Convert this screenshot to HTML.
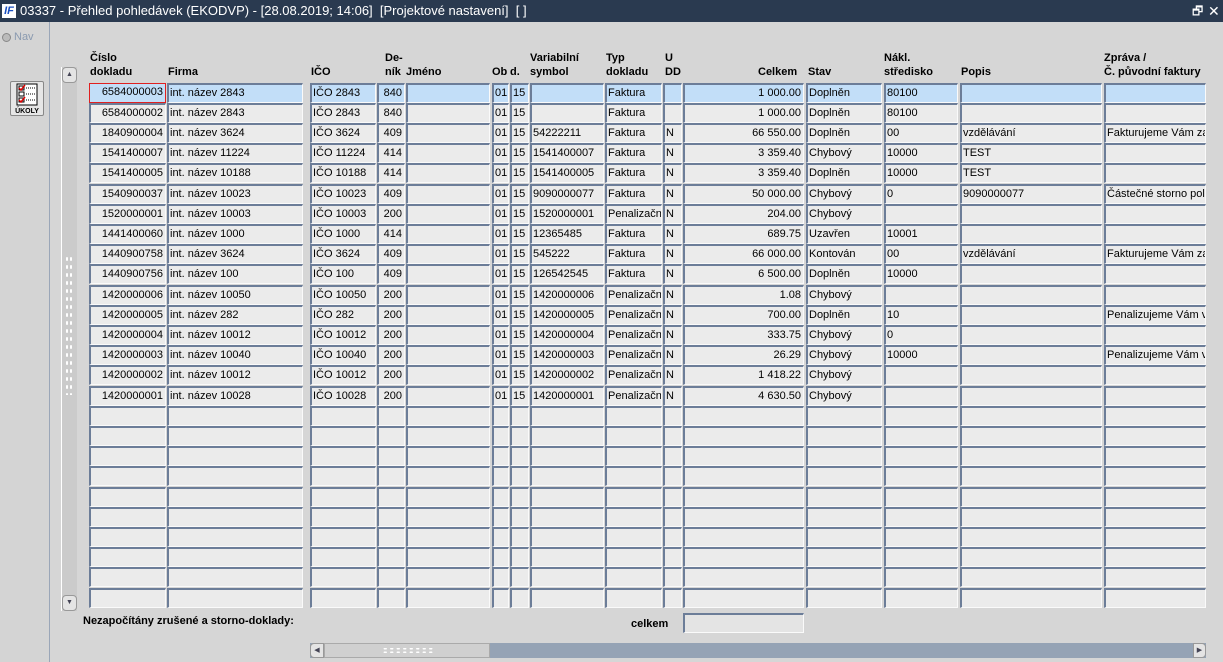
<!DOCTYPE html>
<html><head><meta charset="utf-8">
<style>
*{margin:0;padding:0;box-sizing:border-box}
body{width:1223px;height:662px;overflow:hidden;background:#d6d6d6;font-family:"Liberation Sans",Arial,sans-serif;font-size:11px;color:#000;position:relative}
.a{position:absolute;white-space:nowrap}
#tb{left:0;top:0;width:1223px;height:22px;background:#2a3a50;color:#fff;font-size:13px;line-height:22px}
#left{left:0;top:22px;width:50px;height:640px;background:#d4d4d4;border-right:1px solid #9aa6b8}
.h{font-weight:bold;line-height:14px}
.r{position:absolute;left:0;width:1223px;height:20px}
.r span{position:absolute;top:0;height:20px;background:#ebebeb;border-top:2px solid #6c7d98;border-left:2px solid #6c7d98;border-right:1px solid #fafafa;border-bottom:1px solid #fafafa;line-height:16px;padding-left:1px;padding-right:2px;overflow:hidden;white-space:nowrap}
.s span{background:#c2def8}
.c1{left:89px;width:77px;text-align:right}
.c2{left:167px;width:136px}
.c3{left:310px;width:66px}
.c4{left:377px;width:28px;text-align:right}
.c5{left:406px;width:84px}
.c6{left:492px;width:17px}
.c7{left:510px;width:19px}
.c8{left:530px;width:74px}
.c9{left:605px;width:57px}
.c10{left:663px;width:19px}
.c11{left:683px;width:121px;text-align:right}
.c12{left:806px;width:76px}
.c13{left:884px;width:74px}
.c14{left:960px;width:142px}
.c15{left:1104px;width:102px}
</style></head><body>
<div id="tb" class="a"><span style="position:absolute;left:2px;top:4px;width:14px;height:14px;background:#fff;color:#1a4fc0;font-weight:bold;font-style:italic;font-size:11px;line-height:14px;text-align:center">IF</span><span style="position:absolute;left:20px">03337 - Přehled pohledávek (EKODVP) - [28.08.2019; 14:06]&nbsp; [Projektové nastavení]&nbsp; [ ]</span><span style="position:absolute;left:1192px;font-size:12px">🗗</span><span style="position:absolute;left:1208px;font-size:14px">✕</span></div>
<div id="left" class="a">
<div class="a" style="left:2px;top:11px;width:9px;height:9px;border-radius:50%;background:#bbb;border:1px solid #888"></div>
<div class="a" style="left:14px;top:9px;color:#8a9ab0;font-size:11px">Nav</div>
<div class="a" style="left:10px;top:59px;width:34px;height:35px;background:#e6e6e6;border:1px solid #888;border-radius:2px">
<svg width="32" height="33" viewBox="0 0 32 33"><rect x="6" y="2" width="20" height="21" fill="#fff" stroke="#000"/><rect x="8" y="4" width="5" height="4" fill="none" stroke="#000"/><path d="M8 6l2 2 4-5" stroke="#d00" fill="none" stroke-width="1.5"/><rect x="8" y="10" width="5" height="4" fill="none" stroke="#000"/><rect x="8" y="16" width="5" height="4" fill="none" stroke="#000"/><path d="M8 18l2 2 4-5" stroke="#d00" fill="none" stroke-width="1.5"/><path d="M15 6h9M15 12h9M15 18h9" stroke="#000" stroke-dasharray="1 1"/><text x="16" y="31" font-size="7" font-weight="bold" text-anchor="middle" font-family="Liberation Sans">ÚKOLY</text></svg></div>
</div>
<!-- vertical scrollbar -->
<div class="a" style="left:61px;top:67px;width:16px;height:544px;background:#cbcbcb;border-left:1px solid #fff"></div>
<div class="a" style="left:62px;top:67px;width:15px;height:16px;background:#e4e4e4;border:1px solid #999;border-radius:4px;text-align:center;font-size:7px;line-height:13px;color:#445">▲</div>
<div class="a" style="left:62px;top:595px;width:15px;height:16px;background:#e4e4e4;border:1px solid #999;border-radius:4px;text-align:center;font-size:7px;line-height:13px;color:#445">▼</div>
<div class="a" style="left:65px;top:255px;width:8px;height:140px;background-image:radial-gradient(#fff 35%,transparent 40%);background-size:4px 8px"></div>
<!-- headers -->
<div class="a h" style="left:90px;top:51px">Číslo<br>dokladu</div>
<div class="a h" style="left:168px;top:65px">Firma</div>
<div class="a h" style="left:311px;top:65px">IČO</div>
<div class="a h" style="left:385px;top:51px">De-<br>ník</div>
<div class="a h" style="left:406px;top:65px">Jméno</div>
<div class="a h" style="left:492px;top:65px">Ob</div>
<div class="a h" style="left:510px;top:65px">d.</div>
<div class="a h" style="left:530px;top:51px">Variabilní<br>symbol</div>
<div class="a h" style="left:606px;top:51px">Typ<br>dokladu</div>
<div class="a h" style="left:665px;top:51px">U<br>DD</div>
<div class="a h" style="left:758px;top:65px">Celkem</div>
<div class="a h" style="left:808px;top:65px">Stav</div>
<div class="a h" style="left:884px;top:51px">Nákl.<br>středisko</div>
<div class="a h" style="left:961px;top:65px">Popis</div>
<div class="a h" style="left:1104px;top:51px">Zpráva /<br>Č. původní faktury</div>
<!-- rows -->
<div class="r s" style="top:83px"><span class="c1" style="border:1px solid #e02020;background:#c2def8">6584000003</span><span class="c2">int. název 2843</span><span class="c3">IČO 2843</span><span class="c4">840</span><span class="c5"></span><span class="c6">01</span><span class="c7">15</span><span class="c8"></span><span class="c9">Faktura</span><span class="c10"></span><span class="c11">1 000.00</span><span class="c12">Doplněn</span><span class="c13">80100</span><span class="c14"></span><span class="c15"></span></div>
<div class="r" style="top:103px"><span class="c1">6584000002</span><span class="c2">int. název 2843</span><span class="c3">IČO 2843</span><span class="c4">840</span><span class="c5"></span><span class="c6">01</span><span class="c7">15</span><span class="c8"></span><span class="c9">Faktura</span><span class="c10"></span><span class="c11">1 000.00</span><span class="c12">Doplněn</span><span class="c13">80100</span><span class="c14"></span><span class="c15"></span></div>
<div class="r" style="top:123px"><span class="c1">1840900004</span><span class="c2">int. název 3624</span><span class="c3">IČO 3624</span><span class="c4">409</span><span class="c5"></span><span class="c6">01</span><span class="c7">15</span><span class="c8">54222211</span><span class="c9">Faktura</span><span class="c10">N</span><span class="c11">66 550.00</span><span class="c12">Doplněn</span><span class="c13">00</span><span class="c14">vzdělávání</span><span class="c15">Fakturujeme Vám za</span></div>
<div class="r" style="top:143px"><span class="c1">1541400007</span><span class="c2">int. název 11224</span><span class="c3">IČO 11224</span><span class="c4">414</span><span class="c5"></span><span class="c6">01</span><span class="c7">15</span><span class="c8">1541400007</span><span class="c9">Faktura</span><span class="c10">N</span><span class="c11">3 359.40</span><span class="c12">Chybový</span><span class="c13">10000</span><span class="c14">TEST</span><span class="c15"></span></div>
<div class="r" style="top:163px"><span class="c1">1541400005</span><span class="c2">int. název 10188</span><span class="c3">IČO 10188</span><span class="c4">414</span><span class="c5"></span><span class="c6">01</span><span class="c7">15</span><span class="c8">1541400005</span><span class="c9">Faktura</span><span class="c10">N</span><span class="c11">3 359.40</span><span class="c12">Doplněn</span><span class="c13">10000</span><span class="c14">TEST</span><span class="c15"></span></div>
<div class="r" style="top:184px"><span class="c1">1540900037</span><span class="c2">int. název 10023</span><span class="c3">IČO 10023</span><span class="c4">409</span><span class="c5"></span><span class="c6">01</span><span class="c7">15</span><span class="c8">9090000077</span><span class="c9">Faktura</span><span class="c10">N</span><span class="c11">50 000.00</span><span class="c12">Chybový</span><span class="c13">0</span><span class="c14">9090000077</span><span class="c15">Částečné storno pol</span></div>
<div class="r" style="top:204px"><span class="c1">1520000001</span><span class="c2">int. název 10003</span><span class="c3">IČO 10003</span><span class="c4">200</span><span class="c5"></span><span class="c6">01</span><span class="c7">15</span><span class="c8">1520000001</span><span class="c9">Penalizační</span><span class="c10">N</span><span class="c11">204.00</span><span class="c12">Chybový</span><span class="c13"></span><span class="c14"></span><span class="c15"></span></div>
<div class="r" style="top:224px"><span class="c1">1441400060</span><span class="c2">int. název 1000</span><span class="c3">IČO 1000</span><span class="c4">414</span><span class="c5"></span><span class="c6">01</span><span class="c7">15</span><span class="c8">12365485</span><span class="c9">Faktura</span><span class="c10">N</span><span class="c11">689.75</span><span class="c12">Uzavřen</span><span class="c13">10001</span><span class="c14"></span><span class="c15"></span></div>
<div class="r" style="top:244px"><span class="c1">1440900758</span><span class="c2">int. název 3624</span><span class="c3">IČO 3624</span><span class="c4">409</span><span class="c5"></span><span class="c6">01</span><span class="c7">15</span><span class="c8">545222</span><span class="c9">Faktura</span><span class="c10">N</span><span class="c11">66 000.00</span><span class="c12">Kontován</span><span class="c13">00</span><span class="c14">vzdělávání</span><span class="c15">Fakturujeme Vám za</span></div>
<div class="r" style="top:264px"><span class="c1">1440900756</span><span class="c2">int. název 100</span><span class="c3">IČO 100</span><span class="c4">409</span><span class="c5"></span><span class="c6">01</span><span class="c7">15</span><span class="c8">126542545</span><span class="c9">Faktura</span><span class="c10">N</span><span class="c11">6 500.00</span><span class="c12">Doplněn</span><span class="c13">10000</span><span class="c14"></span><span class="c15"></span></div>
<div class="r" style="top:285px"><span class="c1">1420000006</span><span class="c2">int. název 10050</span><span class="c3">IČO 10050</span><span class="c4">200</span><span class="c5"></span><span class="c6">01</span><span class="c7">15</span><span class="c8">1420000006</span><span class="c9">Penalizační</span><span class="c10">N</span><span class="c11">1.08</span><span class="c12">Chybový</span><span class="c13"></span><span class="c14"></span><span class="c15"></span></div>
<div class="r" style="top:305px"><span class="c1">1420000005</span><span class="c2">int. název 282</span><span class="c3">IČO 282</span><span class="c4">200</span><span class="c5"></span><span class="c6">01</span><span class="c7">15</span><span class="c8">1420000005</span><span class="c9">Penalizační</span><span class="c10">N</span><span class="c11">700.00</span><span class="c12">Doplněn</span><span class="c13">10</span><span class="c14"></span><span class="c15">Penalizujeme Vám v</span></div>
<div class="r" style="top:325px"><span class="c1">1420000004</span><span class="c2">int. název 10012</span><span class="c3">IČO 10012</span><span class="c4">200</span><span class="c5"></span><span class="c6">01</span><span class="c7">15</span><span class="c8">1420000004</span><span class="c9">Penalizační</span><span class="c10">N</span><span class="c11">333.75</span><span class="c12">Chybový</span><span class="c13">0</span><span class="c14"></span><span class="c15"></span></div>
<div class="r" style="top:345px"><span class="c1">1420000003</span><span class="c2">int. název 10040</span><span class="c3">IČO 10040</span><span class="c4">200</span><span class="c5"></span><span class="c6">01</span><span class="c7">15</span><span class="c8">1420000003</span><span class="c9">Penalizační</span><span class="c10">N</span><span class="c11">26.29</span><span class="c12">Chybový</span><span class="c13">10000</span><span class="c14"></span><span class="c15">Penalizujeme Vám v</span></div>
<div class="r" style="top:365px"><span class="c1">1420000002</span><span class="c2">int. název 10012</span><span class="c3">IČO 10012</span><span class="c4">200</span><span class="c5"></span><span class="c6">01</span><span class="c7">15</span><span class="c8">1420000002</span><span class="c9">Penalizační</span><span class="c10">N</span><span class="c11">1 418.22</span><span class="c12">Chybový</span><span class="c13"></span><span class="c14"></span><span class="c15"></span></div>
<div class="r" style="top:386px"><span class="c1">1420000001</span><span class="c2">int. název 10028</span><span class="c3">IČO 10028</span><span class="c4">200</span><span class="c5"></span><span class="c6">01</span><span class="c7">15</span><span class="c8">1420000001</span><span class="c9">Penalizační</span><span class="c10">N</span><span class="c11">4 630.50</span><span class="c12">Chybový</span><span class="c13"></span><span class="c14"></span><span class="c15"></span></div>
<div class="r" style="top:406px"><span class="c1"></span><span class="c2"></span><span class="c3"></span><span class="c4"></span><span class="c5"></span><span class="c6"></span><span class="c7"></span><span class="c8"></span><span class="c9"></span><span class="c10"></span><span class="c11"></span><span class="c12"></span><span class="c13"></span><span class="c14"></span><span class="c15"></span></div>
<div class="r" style="top:426px"><span class="c1"></span><span class="c2"></span><span class="c3"></span><span class="c4"></span><span class="c5"></span><span class="c6"></span><span class="c7"></span><span class="c8"></span><span class="c9"></span><span class="c10"></span><span class="c11"></span><span class="c12"></span><span class="c13"></span><span class="c14"></span><span class="c15"></span></div>
<div class="r" style="top:446px"><span class="c1"></span><span class="c2"></span><span class="c3"></span><span class="c4"></span><span class="c5"></span><span class="c6"></span><span class="c7"></span><span class="c8"></span><span class="c9"></span><span class="c10"></span><span class="c11"></span><span class="c12"></span><span class="c13"></span><span class="c14"></span><span class="c15"></span></div>
<div class="r" style="top:466px"><span class="c1"></span><span class="c2"></span><span class="c3"></span><span class="c4"></span><span class="c5"></span><span class="c6"></span><span class="c7"></span><span class="c8"></span><span class="c9"></span><span class="c10"></span><span class="c11"></span><span class="c12"></span><span class="c13"></span><span class="c14"></span><span class="c15"></span></div>
<div class="r" style="top:487px"><span class="c1"></span><span class="c2"></span><span class="c3"></span><span class="c4"></span><span class="c5"></span><span class="c6"></span><span class="c7"></span><span class="c8"></span><span class="c9"></span><span class="c10"></span><span class="c11"></span><span class="c12"></span><span class="c13"></span><span class="c14"></span><span class="c15"></span></div>
<div class="r" style="top:507px"><span class="c1"></span><span class="c2"></span><span class="c3"></span><span class="c4"></span><span class="c5"></span><span class="c6"></span><span class="c7"></span><span class="c8"></span><span class="c9"></span><span class="c10"></span><span class="c11"></span><span class="c12"></span><span class="c13"></span><span class="c14"></span><span class="c15"></span></div>
<div class="r" style="top:527px"><span class="c1"></span><span class="c2"></span><span class="c3"></span><span class="c4"></span><span class="c5"></span><span class="c6"></span><span class="c7"></span><span class="c8"></span><span class="c9"></span><span class="c10"></span><span class="c11"></span><span class="c12"></span><span class="c13"></span><span class="c14"></span><span class="c15"></span></div>
<div class="r" style="top:547px"><span class="c1"></span><span class="c2"></span><span class="c3"></span><span class="c4"></span><span class="c5"></span><span class="c6"></span><span class="c7"></span><span class="c8"></span><span class="c9"></span><span class="c10"></span><span class="c11"></span><span class="c12"></span><span class="c13"></span><span class="c14"></span><span class="c15"></span></div>
<div class="r" style="top:567px"><span class="c1"></span><span class="c2"></span><span class="c3"></span><span class="c4"></span><span class="c5"></span><span class="c6"></span><span class="c7"></span><span class="c8"></span><span class="c9"></span><span class="c10"></span><span class="c11"></span><span class="c12"></span><span class="c13"></span><span class="c14"></span><span class="c15"></span></div>
<div class="r" style="top:588px"><span class="c1"></span><span class="c2"></span><span class="c3"></span><span class="c4"></span><span class="c5"></span><span class="c6"></span><span class="c7"></span><span class="c8"></span><span class="c9"></span><span class="c10"></span><span class="c11"></span><span class="c12"></span><span class="c13"></span><span class="c14"></span><span class="c15"></span></div>
<!-- footer -->
<div class="a h" style="left:83px;top:614px">Nezapočítány zrušené a storno-doklady:</div>
<div class="a h" style="left:631px;top:617px">celkem</div>
<div class="a" style="left:683px;top:613px;width:121px;height:20px;background:#e4e4e4;border-top:2px solid #6c7d98;border-left:2px solid #6c7d98;border-right:1px solid #fafafa;border-bottom:1px solid #fafafa"></div>
<!-- horizontal scrollbar -->
<div class="a" style="left:310px;top:643px;width:896px;height:15px;background:#95a3b5"></div>
<div class="a" style="left:310px;top:643px;width:14px;height:15px;background:#e4e4e4;border:1px solid #999;border-radius:4px 0 0 4px;font-size:7px;line-height:13px;text-align:center;color:#445">◀</div>
<div class="a" style="left:324px;top:643px;width:166px;height:15px;background:#d0d0d0;border:1px solid #aaa"></div>
<div class="a" style="left:382px;top:647px;width:52px;height:7px;background-image:radial-gradient(#fff 35%,transparent 40%);background-size:6.5px 3.5px"></div>
<div class="a" style="left:1193px;top:643px;width:13px;height:15px;background:#e4e4e4;border:1px solid #999;border-radius:0 4px 4px 0;font-size:7px;line-height:13px;text-align:center;color:#445">▶</div>
</body></html>
